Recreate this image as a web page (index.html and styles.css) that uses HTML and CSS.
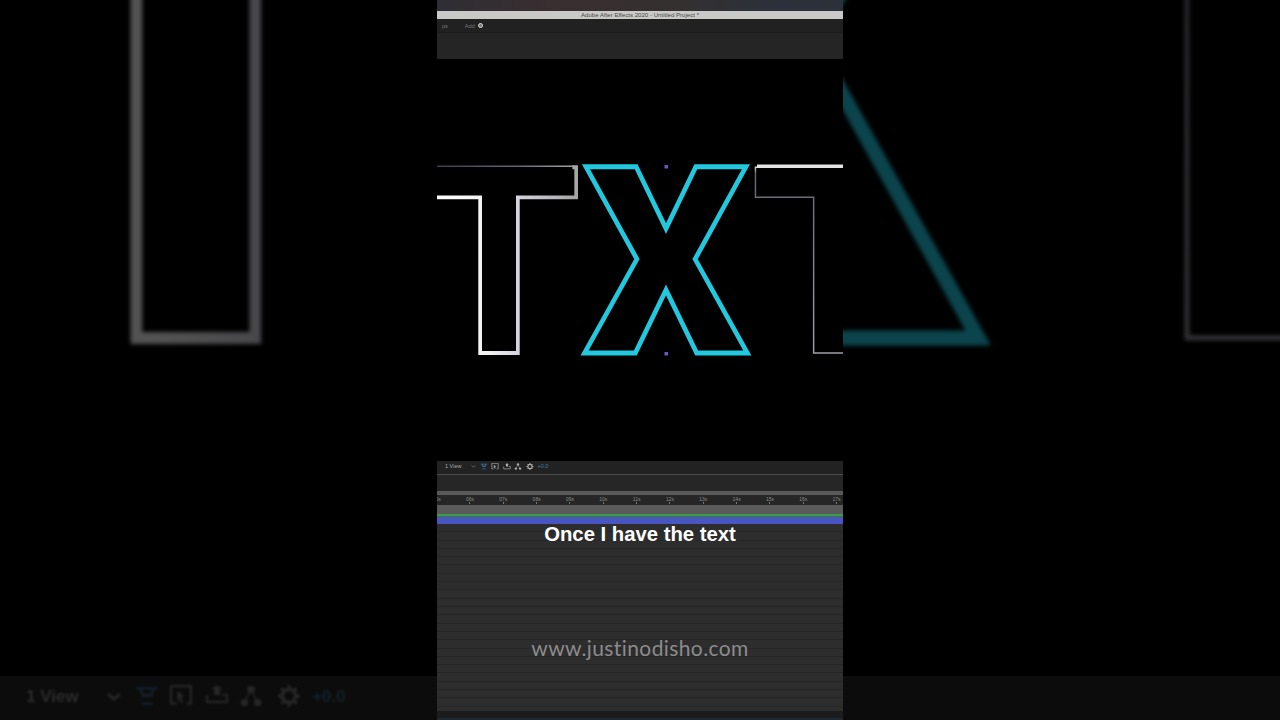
FILE: index.html
```html
<!DOCTYPE html>
<html lang="en">
<head>
  <meta charset="UTF-8">
  <title>Once I have the text</title>
  <link rel="stylesheet" href="styles.css">
</head>
<body>
  <svg class="defs" width="0" height="0" aria-hidden="true">
    <defs>
      <linearGradient id="leftT" gradientUnits="userSpaceOnUse" x1="-64" y1="0" x2="79" y2="0">
        <stop offset="0" stop-color="#ffffff"/>
        <stop offset="0.36" stop-color="#f2f2f2"/>
        <stop offset="0.6" stop-color="#d2d2dc"/>
        <stop offset="1" stop-color="#a6a6a6"/>
      </linearGradient>
      <linearGradient id="leftTop" gradientUnits="userSpaceOnUse" x1="437" y1="0" x2="576" y2="0">
        <stop offset="0" stop-color="#3c3c52"/>
        <stop offset="0.6" stop-color="#66667a"/>
        <stop offset="1" stop-color="#a6a6a6"/>
      </linearGradient>
      <linearGradient id="rightT" gradientUnits="userSpaceOnUse" x1="756" y1="166" x2="756" y2="356">
        <stop offset="0" stop-color="#e8e8e8"/>
        <stop offset="0.04" stop-color="#66666e"/>
        <stop offset="1" stop-color="#a0a0a8"/>
      </linearGradient>
      <symbol id="letters" viewBox="0 0 1280 720" width="1280" height="720" overflow="visible">
        <text class="big t-left" y="353" transform="translate(499 0) scale(0.97 1)">T</text>
        <text class="big-x x-mid" y="353" transform="translate(666 0) scale(0.98 1)">X</text>
        <text class="big t-right" y="353" transform="translate(832.500 0) scale(0.97 1)">T</text>
      </symbol>
      <symbol id="ico-filter" viewBox="0 0 12 10"><path d="M1 1.500h10M3 1.500l1 3h4l1-3M3.500 5h5M3.500 8.500h5" fill="none" stroke="currentColor"/></symbol>
      <symbol id="ico-box" viewBox="0 0 10 10"><path d="M.5.5h9v8h-2M3 8.500H.5v-8" fill="none" stroke="currentColor"/><path d="M3.500 2.500l3 3-1.500.3 1 2-1 .5-1-2-.9 1z" fill="currentColor"/></symbol>
      <symbol id="ico-tray" viewBox="0 0 12 10"><path d="M1 5v3.500h10V5H8.500" fill="none" stroke="currentColor"/><path d="M4.500 5h3V2H9L6 0 3 2h1.500z" fill="currentColor"/></symbol>
      <symbol id="ico-tree" viewBox="0 0 10 10"><circle cx="5" cy="2" r="1.700" fill="currentColor"/><circle cx="2" cy="8" r="1.700" fill="currentColor"/><circle cx="8" cy="8" r="1.700" fill="currentColor"/><path d="M5 2L2 8M5 2l3 6" stroke="currentColor" stroke-width=".6"/></symbol>
      <symbol id="ico-gear" viewBox="0 0 10 10"><circle cx="5" cy="5" r="3" fill="none" stroke="currentColor" stroke-width="1.600"/><path d="M5 0v2M5 8v2M0 5h2M8 5h2M1.500 1.500l1.400 1.400M7.100 7.100l1.400 1.400M8.500 1.500L7.100 2.900M2.900 7.100L1.500 8.500" stroke="currentColor" stroke-width="1.300"/></symbol>
    </defs>
  </svg>

  <div class="stage">
    <div class="side">
      <svg class="side-art" viewBox="0 0 437 720">
        <rect class="side-bar" x="0" y="676" width="437" height="44"/>
        <g class="side-letters" transform="translate(640 360) scale(3.15) translate(-640 -360)">
          <use href="#letters" width="1280" height="720"/>
        </g>
        <g class="side-tools">
          <text x="26" y="702">1 View</text>
          <path class="side-chev" d="M108 694l6 5 6-5"/>
          <use href="#ico-filter" class="side-blue" x="134" y="685" width="26" height="22"/>
          <use href="#ico-box" x="170" y="685" width="22" height="22"/>
          <use href="#ico-tray" x="205" y="685" width="24" height="20"/>
          <use href="#ico-tree" x="240" y="685" width="22" height="22"/>
          <use href="#ico-gear" x="278" y="685" width="22" height="22"/>
          <text x="312" y="702" class="side-num">+0.0</text>
        </g>
      </svg>
    </div>

    <div class="video">
      <div class="desktop-strip"></div>
      <div class="title-bar">Adobe After Effects 2020 - Untitled Project *</div>
      <div class="top-panel">
        <div class="top-tools">
          <span class="tool-ps">ps</span>
          <span class="tool-add">Add:</span>
          <span class="tool-dot"></span>
        </div>
      </div>

      <div class="comp">
        <svg class="comp-art" viewBox="437 59 406 402">
          <use href="#letters" width="1280" height="720"/>
          <rect class="t-mask" x="437" y="163" width="135.400" height="7"/>
          <rect class="t-top" x="437" y="165.500" width="137" height="1.500"/>
          <rect class="t-cap" x="757" y="164.500" width="86" height="3.500"/>
          <rect class="handle" x="664.500" y="165" width="3.500" height="3.500"/>
          <rect class="handle" x="664.500" y="352" width="3.500" height="3.500"/>
        </svg>
      </div>

      <div class="timeline">
        <div class="view-bar">
          <span class="view-name">1 View</span>
          <svg class="chev" viewBox="0 0 6 4"><path d="M.5.5L3 3 5.500.5" fill="none" stroke="currentColor"/></svg>
          <svg class="tool-ico blue"><use href="#ico-filter"/></svg>
          <svg class="tool-ico"><use href="#ico-box"/></svg>
          <svg class="tool-ico"><use href="#ico-tray"/></svg>
          <svg class="tool-ico"><use href="#ico-tree"/></svg>
          <svg class="tool-ico"><use href="#ico-gear"/></svg>
          <span class="view-num">+0.0</span>
        </div>
        <div class="blank-row"></div>
        <div class="scroll-row"></div>
        <div class="ruler">
          <span>05s</span><span>06s</span><span>07s</span><span>08s</span><span>09s</span><span>10s</span><span>11s</span><span>12s</span><span>13s</span><span>14s</span><span>15s</span><span>16s</span><span>17s</span>
        </div>
        <div class="work-row"></div>
        <div class="green-line"></div>
        <div class="layer-bar"></div>
        <div class="tracks">
          <p class="caption">Once I have the text</p>
          <p class="watermark">www.justinodisho.com</p>
        </div>
        <div class="foot"></div>
      </div>
    </div>

    <div class="side">
      <svg class="side-art" viewBox="843 0 437 720">
        <rect class="side-bar" x="843" y="676" width="437" height="44"/>
        <g class="side-letters" transform="translate(640 360) scale(3.15) translate(-640 -360)">
          <use href="#letters" width="1280" height="720"/>
        </g>
      </svg>
    </div>
  </div>
</body>
</html>
```

FILE: styles.css
```css
html, body {
  margin: 0;
  height: 100%;
  background: #000;
  overflow: hidden;
}
.defs {
  position: absolute;
}
.stage {
  display: flex;
  width: 1280px;
  height: 720px;
  font-family: "Liberation Sans", Arial, sans-serif;
}

/* big outlined letters */
.big {
  font-family: "Liberation Sans", Arial, sans-serif;
  font-weight: bold;
  font-size: 270px;
  fill: none;
  text-anchor: middle;
}
.big-x {
  font-family: Roboto, "Liberation Sans", sans-serif;
  font-weight: 900;
  font-size: 262px;
  fill: none;
  text-anchor: middle;
}
.t-left {
  stroke: url(#leftT);
  stroke-width: 3.800px;
}
.x-mid {
  stroke: #22c8de;
  stroke-width: 4.800px;
}
.t-right {
  stroke: url(#rightT);
  stroke-width: 1.500px;
}
.t-mask {
  fill: #000;
}
.t-top {
  fill: url(#leftTop);
}
.t-cap {
  fill: #e4e4e4;
}
.handle {
  fill: #6a55c4;
}

/* dimmed copies either side */
.side {
  width: 437px;
  height: 720px;
  flex: none;
}
.side-art {
  display: block;
  width: 437px;
  height: 720px;
}
.side-letters {
  opacity: 0.34;
  filter: blur(0.6px);
}
.side-bar {
  fill: #0c0c0c;
}
.side-tools {
  color: #262626;
  filter: blur(1.200px);
}
.side-tools text {
  font-family: "Liberation Sans", Arial, sans-serif;
  font-size: 17px;
  font-weight: bold;
  fill: #2c2c2c;
}
.side-tools .side-num {
  fill: #14222a;
}
.side-chev {
  fill: none;
  stroke: #262626;
  stroke-width: 3;
}
.side-blue {
  color: #15202e;
}

/* the video column */
.video {
  width: 406px;
  height: 720px;
  flex: none;
  display: flex;
  flex-direction: column;
  overflow: hidden;
}
.desktop-strip {
  height: 11px;
  background: linear-gradient(90deg, #2e2e34 0%, #3a2e30 30%, #33302f 60%, #2c303c 85%, #2c3038 100%);
}
.title-bar {
  height: 8px;
  line-height: 8px;
  background: #c9c9c7;
  color: #4a4a4a;
  font-size: 6.100px;
  text-align: center;
}
.top-panel {
  height: 40px;
  background: #252525;
}
.top-tools {
  height: 13px;
  display: flex;
  align-items: center;
  background: #212121;
  border-bottom: 1px solid #1c1c1c;
  color: #777;
  font-size: 5.500px;
}
.tool-ps {
  margin-left: 5px;
}
.tool-add {
  margin-left: 17px;
}
.tool-dot {
  width: 3px;
  height: 3px;
  margin-left: 2px;
  border-radius: 50%;
  border: 1px solid #ddd;
  background: #777;
}
.comp {
  height: 402px;
  background: #000;
}
.comp-art {
  display: block;
  width: 406px;
  height: 402px;
  filter: blur(0.3px);
}

/* timeline */
.timeline {
  flex: 1;
  display: flex;
  flex-direction: column;
  background: #2b2b2b;
}
.view-bar {
  height: 10px;
  padding-bottom: 3px;
  display: flex;
  align-items: center;
  background: #222;
  color: #aaa;
  font-size: 5.500px;
}
.view-name {
  margin-left: 8px;
  width: 26px;
}
.chev {
  width: 5px;
  height: 3px;
  color: #777;
  margin-right: 3.500px;
}
.tool-ico {
  width: 8px;
  height: 7px;
  margin-right: 3.500px;
  color: #aaa;
}
.tool-ico.blue {
  color: #3f7fc0;
}
.view-num {
  color: #3f7fb0;
  margin-left: 0.500px;
}
.blank-row {
  height: 16px;
  background: #262626;
  border-top: 1px solid #4a4a4a;
}
.scroll-row {
  height: 4px;
  background: #595959;
}
.ruler {
  height: 10px;
  display: flex;
  margin-left: -17px;
  background: #262626;
  color: #8c8c8c;
  font-size: 5px;
}
.ruler span {
  width: 33.330px;
  flex: none;
  text-align: center;
  line-height: 8px;
  background: linear-gradient(#777, #777) center bottom 1px / 1px 2px no-repeat;
}
.work-row {
  height: 9px;
  background: #5a5a5a;
}
.green-line {
  height: 2px;
  background: #3f9a45;
}
.layer-bar {
  height: 8px;
  background: linear-gradient(#3f6a78, #4a55c4 45%, #4a55c4);
}
.tracks {
  flex: 1;
  display: flex;
  flex-direction: column;
  align-items: center;
  background: repeating-linear-gradient(#2d2d2d 0, #2d2d2d 7.300px, #272727 7.300px, #272727 8.300px);
}
.caption {
  margin: 0;
  color: #fff;
  font-size: 20.300px;
  font-weight: bold;
  line-height: 20px;
}
.watermark {
  margin: 92px 0 0;
  color: #8b8b8b;
  font-family: Lato, "Liberation Sans", sans-serif;
  font-size: 21px;
  font-variant-ligatures: none;
  letter-spacing: 0.400px;
  line-height: 24px;
}
.foot {
  height: 9px;
  background: linear-gradient(#1c1c1c 7px, #1d2a33 7px);
}
```
